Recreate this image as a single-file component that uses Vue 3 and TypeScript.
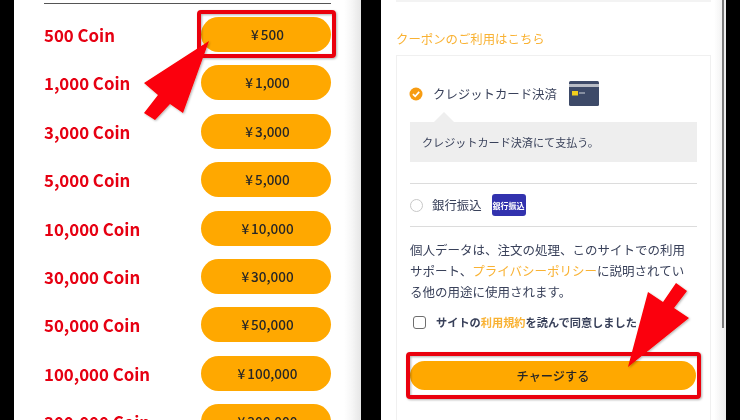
<script setup lang="ts">
const plans = [
  { coin: '500', price: '500' },
  { coin: '1,000', price: '1,000' },
  { coin: '3,000', price: '3,000' },
  { coin: '5,000', price: '5,000' },
  { coin: '10,000', price: '10,000' },
  { coin: '30,000', price: '30,000' },
  { coin: '50,000', price: '50,000' },
  { coin: '100,000', price: '100,000' },
  { coin: '300,000', price: '300,000' },
]
</script>

<template>
  <div class="page">
    <section class="coins">
      <div class="coins-rule"></div>
      <div v-for="plan in plans" :key="plan.coin" class="plan">
        <span class="plan-name">{{ plan.coin }} Coin</span>
        <button class="plan-btn"><span class="yen">¥</span>{{ plan.price }}</button>
      </div>
    </section>

    <section class="checkout">
      <div class="checkout-inner">
        <div class="top-rule"></div>
        <a class="coupon">クーポンのご利用はこちら</a>
        <div class="card">
          <div class="method method-card">
            <svg class="radio" width="14" height="14" viewBox="0 0 14 14">
              <circle cx="7" cy="7" r="6.5" fill="#f79c12" />
              <path d="M3.9 7.2 6.2 9.4 10.2 4.9" fill="none" stroke="#fff" stroke-width="1.7" />
            </svg>
            <span class="method-name">クレジットカード決済</span>
            <svg class="card-icon" width="30" height="25" viewBox="0 0 30 25">
              <rect width="30" height="25" rx="1.5" fill="#3d4a68" />
              <rect y="3" width="30" height="3" fill="#b9bdc6" />
              <rect x="3" y="10" width="6" height="4.5" fill="#f2cf1d" />
              <rect x="10" y="11.5" width="6" height="1" fill="#cfd3da" />
            </svg>
          </div>
          <div class="method-note">クレジットカード決済にて支払う。</div>
          <hr class="line line-a" />
          <div class="method method-bank">
            <span class="radio-off"></span>
            <span class="method-name">銀行振込</span>
            <span class="bank-badge">銀行振込</span>
          </div>
          <hr class="line line-b" />
          <p class="privacy">
            個人データは、注文の処理、このサイトでの利用サポート、<a>プライバシーポリシー</a>に説明されている他の用途に使用されます。
          </p>
          <label class="agree">
            <span class="agree-box"></span>
            <span>サイトの<a>利用規約</a>を読んで同意しました</span>
          </label>
          <button class="charge">チャージする</button>
        </div>
      </div>
      <div class="scroll-thumb"></div>
    </section>

    <svg class="marks" width="740" height="420" viewBox="0 0 740 420">
      <defs>
        <filter id="shade" x="-10%" y="-10%" width="120%" height="120%">
          <feDropShadow dx="1" dy="1" stdDeviation="1" flood-color="#000" flood-opacity="0.3" />
        </filter>
      </defs>
      <g filter="url(#shade)">
        <rect x="199" y="12" width="135" height="44" rx="2" fill="none" stroke="#ea0010" stroke-width="4" />
        <rect x="408" y="354" width="291" height="43" rx="2" fill="none" stroke="#ea0010" stroke-width="4" />
        <polygon points="209,41 144,83 158,95 144,113 155,120 170,104 183,113" fill="#fb0007" />
        <polygon points="628,367 648,292 663,302 676,283 687,291 674,308 689,318" fill="#fb0007" />
      </g>
    </svg>
  </div>
</template>

<style>
body {
  margin: 0;
  background: #000;
}
</style>

<style scoped>
.page {
  position: relative;
  display: flex;
  width: 740px;
  height: 420px;
  overflow: hidden;
  background: #000;
  font-family: "Noto Sans CJK JP", "Noto Sans", sans-serif;
  color: #39415a;
  filter: blur(0.35px);
}

.coins {
  box-sizing: border-box;
  width: 347px;
  height: 420px;
  margin-left: 14px;
  padding: 3px 30px 0;
  overflow: hidden;
  background: linear-gradient(90deg, #fff 0, #fff 330px, #f6f6f6 338px, #e6e6e6 347px);
}

.coins-rule {
  height: 1px;
  margin-bottom: 13px;
  background: #555;
}

.plan {
  display: flex;
  align-items: center;
  justify-content: space-between;
  height: 35px;
  margin-bottom: 13.4px;
}

.plan-name {
  padding-top: 1px;
  font-size: 16.8px;
  font-weight: 700;
  color: #e60012;
}

.plan-btn {
  width: 130px;
  height: 35px;
  padding: 0 0 1px 3px;
  border: 0;
  border-radius: 17.5px;
  background: #ffa800;
  color: #262626;
  font-family: inherit;
  font-size: 13.5px;
  font-weight: 500;
}

.yen {
  margin-right: 2px;
}

.checkout {
  position: relative;
  box-sizing: border-box;
  width: 345px;
  height: 420px;
  margin-left: 20px;
  background: linear-gradient(90deg, #fff 0, #fff 333px, #ededed 345px);
}

.checkout-inner {
  box-sizing: border-box;
  width: 331px;
  height: 420px;
  padding: 0 1px 0 15px;
  overflow: hidden;
}

.top-rule {
  height: 2px;
  background: #f3f3f3;
}

.coupon {
  display: block;
  height: 20px;
  margin-top: 27px;
  font-size: 12.4px;
  line-height: 20px;
  color: #f9b233;
}

.card {
  box-sizing: border-box;
  height: 380px;
  margin-top: 6px;
  padding: 25px 13px 0;
  border: 1px solid #f0f0f0;
}

.method {
  display: flex;
  align-items: center;
}

.method-card {
  height: 25px;
}

.radio {
  flex: none;
  margin-right: 10px;
  margin-left: -1px;
}

.method-name {
  font-size: 12.4px;
}

.card-icon {
  margin-left: 12px;
}

.method-note {
  position: relative;
  box-sizing: border-box;
  height: 40px;
  margin-top: 16px;
  padding-left: 12px;
  background: #eeeeee;
  font-size: 11.1px;
  line-height: 40px;
}

.method-note::before {
  content: "";
  position: absolute;
  top: -10px;
  left: 24px;
  border-right: 10px solid transparent;
  border-bottom: 10px solid #eeeeee;
  border-left: 10px solid transparent;
}

.line {
  height: 1px;
  margin: 0;
  border: 0;
  background: #dcdcdc;
}

.line-a {
  margin-top: 21px;
}

.line-b {
  margin-top: 10px;
}

.method-bank {
  height: 22px;
  margin-top: 10px;
}

.radio-off {
  flex: none;
  box-sizing: border-box;
  width: 13px;
  height: 13px;
  margin-right: 9px;
  border: 1px solid #c8c8c8;
  border-radius: 50%;
  background: #fff;
}

.bank-badge {
  box-sizing: border-box;
  width: 34px;
  height: 22px;
  margin-left: 10px;
  border-radius: 3px;
  background: #3232ae;
  color: #fff;
  font-size: 8px;
  font-weight: 700;
  line-height: 24px;
  text-align: center;
  white-space: nowrap;
}

.privacy {
  margin: 12px 0 0;
  padding-right: 10px;
  font-size: 12.5px;
  line-height: 21px;
}

.privacy a,
.agree a {
  color: #f9b233;
}

.agree {
  display: flex;
  align-items: center;
  height: 20px;
  margin-top: 10px;
  padding-left: 3px;
  font-size: 11.2px;
  font-weight: 700;
  white-space: nowrap;
}

.agree-box {
  box-sizing: border-box;
  width: 13px;
  height: 13px;
  margin-right: 10px;
  border: 1.5px solid #6e6e6e;
  border-radius: 3px;
}

.charge {
  display: block;
  width: 286px;
  height: 29px;
  margin-top: 29px;
  padding: 0;
  border: 0;
  border-radius: 14.5px;
  background: #ffa800;
  color: #262626;
  font-family: inherit;
  font-size: 12.2px;
  font-weight: 500;
}

.scroll-thumb {
  position: absolute;
  top: 0;
  right: 2px;
  width: 2px;
  height: 328px;
  background: #7a7a7a;
}

.marks {
  position: absolute;
  top: 0;
  left: 0;
}
</style>
